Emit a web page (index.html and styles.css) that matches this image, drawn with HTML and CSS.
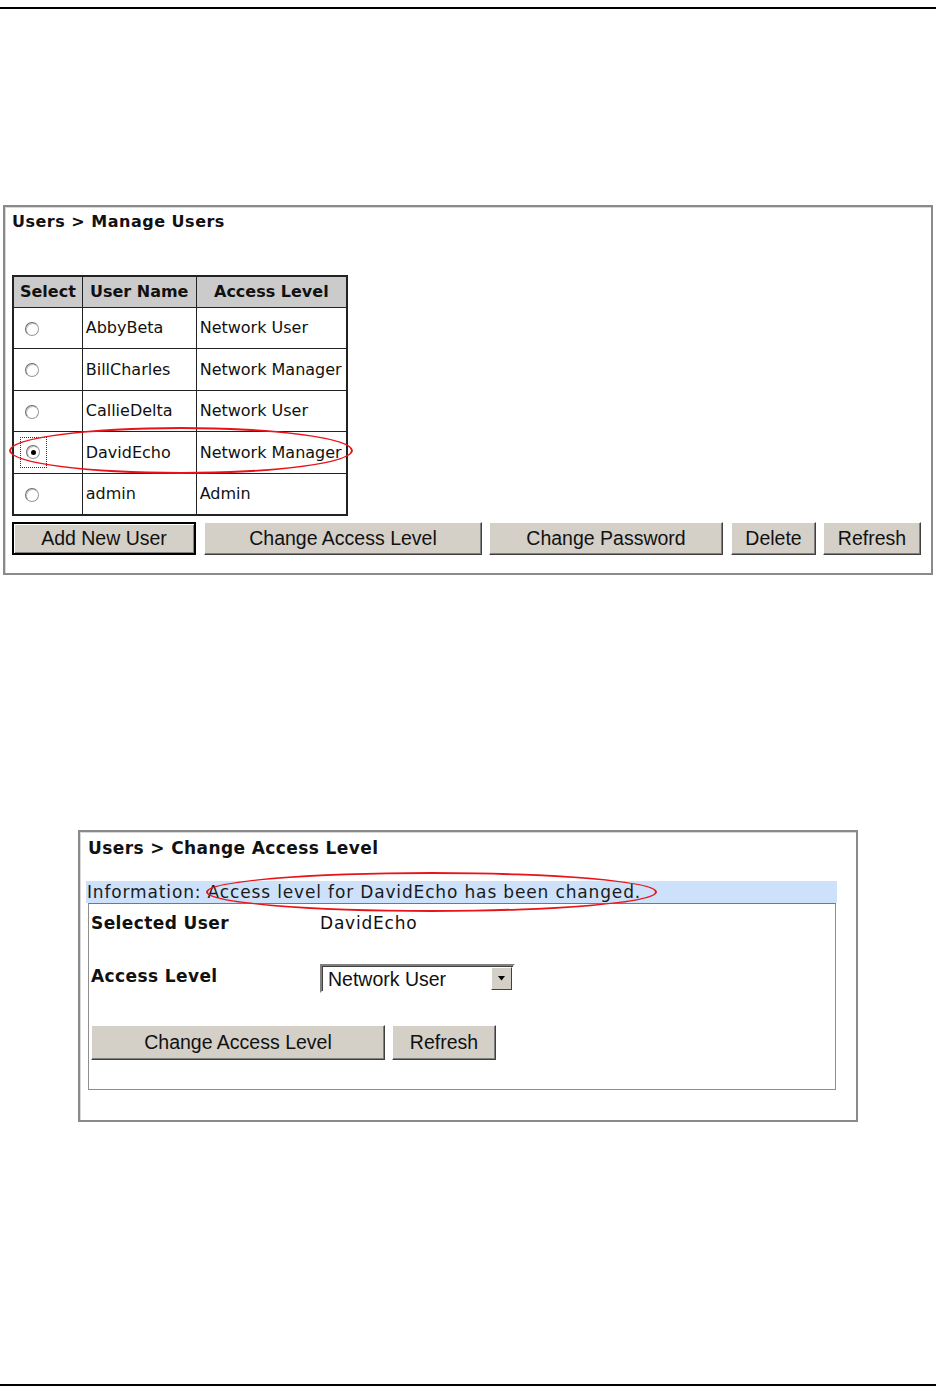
FILE: index.html
```html
<!DOCTYPE html>
<html>
<head>
<meta charset="utf-8">
<link rel="stylesheet" href="styles.css">
</head>
<body>
<div class="rule rule-top"></div>

<section class="panel panel-manage">
  <h2 class="crumb">Users &gt; Manage Users</h2>
  <div class="table-wrap">
    <table class="users">
      <thead>
        <tr><th class="c-sel">Select</th><th class="c-name">User Name</th><th class="c-level">Access Level</th></tr>
      </thead>
      <tbody>
        <tr><td><span class="radio"></span></td><td>AbbyBeta</td><td>Network User</td></tr>
        <tr><td><span class="radio"></span></td><td>BillCharles</td><td>Network Manager</td></tr>
        <tr><td><span class="radio"></span></td><td>CallieDelta</td><td>Network User</td></tr>
        <tr><td><span class="focus"><span class="radio checked"></span></span></td><td>DavidEcho</td><td>Network Manager</td></tr>
        <tr><td><span class="radio"></span></td><td>admin</td><td>Admin</td></tr>
      </tbody>
    </table>
    <div class="ring ring-row"></div>
  </div>
  <div class="btn-row">
    <button class="btn btn-default w-add">Add New User</button>
    <button class="btn w-cal">Change Access Level</button>
    <button class="btn w-pwd">Change Password</button>
    <button class="btn w-del">Delete</button>
    <button class="btn w-ref">Refresh</button>
  </div>
</section>

<section class="panel panel-change">
  <h2 class="crumb">Users &gt; Change Access Level</h2>
  <div class="info-wrap">
    <div class="info">Information: Access level for DavidEcho has been changed.</div>
    <div class="ring ring-info"></div>
  </div>
  <div class="form-box">
    <div class="form-row row-user">
      <span class="label">Selected User</span>
      <span class="value">DavidEcho</span>
    </div>
    <div class="form-row row-level">
      <span class="label">Access Level</span>
      <div class="select">
        <span class="select-text">Network User</span>
        <span class="select-btn"><svg width="9" height="5" viewBox="0 0 9 5"><path d="M1 0H8L4.5 4.5Z" fill="#000"/></svg></span>
      </div>
    </div>
    <div class="form-actions">
      <button class="btn w-cal2">Change Access Level</button>
      <button class="btn w-ref2">Refresh</button>
    </div>
  </div>
</section>

<div class="rule rule-bottom"></div>
</body>
</html>
```

FILE: styles.css
```css
* { box-sizing: border-box; }
html, body { margin: 0; padding: 0; background: #fff; }
body {
  width: 936px;
  height: 1394px;
  font-family: "DejaVu Sans", Verdana, sans-serif;
  color: #111;
  position: relative;
  overflow: hidden;
}

.rule { height: 2px; background: #000; width: 100%; }
.rule-top { margin-top: 7px; }
.rule-bottom { margin-top: 262px; }

.panel {
  border: 2px solid #8a8a8a;
  box-shadow: inset 1px 1px 0 #d8d8d8;
  background: #fff;
}

.crumb {
  margin: 0;
  font-size: 16px;
  line-height: 20px;
  font-weight: bold;
  color: #111;
}

/* ---------- Manage users ---------- */
.panel-manage {
  margin: 196px 0 0 3px;
  width: 930px;
  height: 370px;
  padding: 5px 0 0 7px;
}
.panel-manage .crumb { letter-spacing: 0.5px; }

.table-wrap {
  position: relative;
  margin-top: 43px;
  width: 336px;
}

.users {
  border-collapse: collapse;
  border: 2px solid #222;
  font-size: 16px;
  width: 336px;
}
.users th, .users td {
  border: 1px solid #222;
  padding: 0 3px;
  text-align: left;
  white-space: nowrap;
}
.users th {
  background: #cbcbcb;
  height: 31px;
  font-weight: bold;
  text-align: center;
}
.users td { height: 41.6px; }
.users .c-sel { width: 70px; }
.users .c-name { width: 115px; }
.users .c-level { width: 151px; }
.users td:first-child { padding-left: 11px; }

.radio {
  display: inline-block;
  width: 14px;
  height: 14px;
  border-radius: 50%;
  border: 1px solid #9a9a9a;
  border-top-color: #6e6e6e;
  border-left-color: #6e6e6e;
  background: #fff;
  box-shadow: inset 1px 1px 0 #c4c4c4;
  vertical-align: middle;
  position: relative;
}
.radio.checked::after {
  content: "";
  position: absolute;
  left: 3.5px;
  top: 3.5px;
  width: 5px;
  height: 5px;
  border-radius: 50%;
  background: #000;
}
.focus {
  display: inline-block;
  margin-left: -5px;
  padding: 7px 6px 8px 5px;
  border: 1px dotted #333;
  line-height: 0;
}

.ring {
  position: absolute;
  border: 2.5px solid #e8141a;
  border-radius: 50%;
  pointer-events: none;
}
.ring-row {
  left: -3px;
  top: 152px;
  width: 344px;
  height: 47px;
}

.btn-row {
  display: flex;
  margin-top: 6px;
}
.btn {
  height: 33px;
  background: #d4d0c8;
  border: 1px solid;
  border-color: #fff #404040 #404040 #fff;
  box-shadow: inset -1px -1px 0 #808080;
  font-family: "Liberation Sans", Arial, sans-serif;
  font-size: 19.5px;
  color: #111;
  padding: 0;
  margin-right: 8px;
}
.btn-default {
  border: 2px solid #000;
  box-shadow: inset 1px 1px 0 #fff, inset -1px -1px 0 #808080;
}
.w-add { width: 184px; }
.w-cal { width: 278px; margin-right: 7px; }
.w-pwd { width: 234px; }
.w-del { width: 85px; margin-right: 7px; }
.w-ref { width: 98px; }

/* ---------- Change access level ---------- */
.panel-change {
  margin: 255px 0 0 78px;
  width: 780px;
  height: 292px;
  padding: 6px 0 0 8px;
}
.panel-change .crumb {
  font-size: 17px;
  line-height: 21px;
  letter-spacing: 0.4px;
}

.info-wrap {
  position: relative;
  margin: 22px 0 0 -2px;
  width: 751px;
}
.info {
  background: #cde1fa;
  height: 22px;
  font-size: 17px;
  line-height: 23px;
  letter-spacing: 0.85px;
  color: #1a1a1a;
  padding-left: 1px;
  white-space: nowrap;
}
.ring-info {
  left: 120px;
  top: -9px;
  width: 451px;
  height: 40px;
}

.form-box {
  width: 748px;
  height: 187px;
  border: 1px solid #8e8e8e;
  border-top-color: #777;
  padding: 9px 0 0 2px;
}
.form-row {
  display: flex;
  align-items: flex-start;
  font-size: 17px;
  line-height: 21px;
}
.label {
  width: 229px;
  font-weight: bold;
  letter-spacing: 0.4px;
}
.value { letter-spacing: 0.8px; }
.row-level { margin-top: 31px; }
.row-level .label { padding-top: 1px; }

.select {
  display: flex;
  align-items: stretch;
  width: 195px;
  height: 29px;
  border: 2px solid;
  border-color: #808080 #fff #fff #808080;
  box-shadow: inset 1px 1px 0 #404040;
  background: #fff;
  margin-top: -1px;
}
.select-text {
  flex: 1;
  font-family: "Liberation Sans", Arial, sans-serif;
  font-size: 19.5px;
  line-height: 25px;
  padding-left: 6px;
  padding-top: 1px;
}
.select-btn {
  width: 21px;
  margin: 1px 1px 1px 0;
  background: #d4d0c8;
  border: 1px solid;
  border-color: #fff #404040 #404040 #fff;
  display: flex;
  align-items: center;
  justify-content: center;
}

.form-actions {
  display: flex;
  margin-top: 32px;
}
.form-actions .btn { height: 35px; margin-right: 7px; }
.w-cal2 { width: 294px; }
.w-ref2 { width: 104px; }
```
